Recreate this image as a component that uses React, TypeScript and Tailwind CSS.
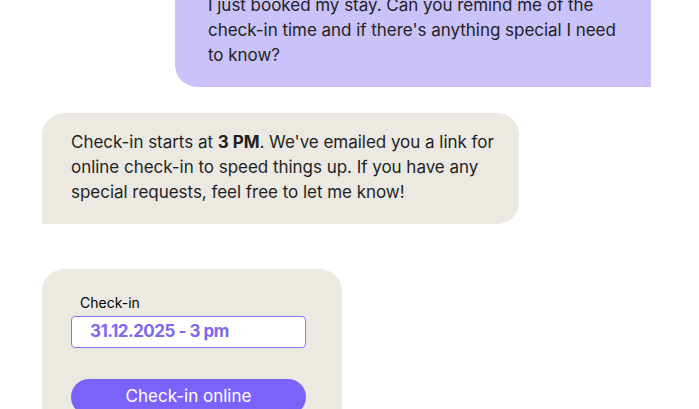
export default function App() {
  return (
    <div
      className="w-[699px] h-[409px] overflow-hidden bg-white text-[#1f1e22]"
      style={{ fontFamily: "Inter, 'Noto Sans', sans-serif" }}
    >
      <div className="flex flex-col mt-[-25px]">
        <div className="flex justify-end pr-[48px]">
          <div className="w-[476px] bg-[#c9c2fb] rounded-[22px] rounded-br-none pl-[33px] pr-[30px] pt-[18px] pb-[19px] text-[17px] leading-[25px] tracking-[-0.03px]">
            I just booked my stay. Can you remind me of the check-in time and if there's anything special I need to know?
          </div>
        </div>
        <div className="flex pl-[42px] mt-[26px]">
          <div className="w-[477px] bg-[#ece9e2] rounded-[22px] rounded-bl-none pl-[29px] pr-[22px] pt-[17px] pb-[19px] text-[17px] leading-[25px] tracking-[-0.03px]">
            Check-in starts at <span className="font-bold">3 PM</span>. We've emailed you a link for online check-in to speed things up. If you have any special requests, feel free to let me know!
          </div>
        </div>
        <div className="flex pl-[42px] mt-[45px]">
          <div className="w-[300px] h-[200px] bg-[#ece9e2] rounded-t-[22px] pl-[29px] pr-[36px] pt-[24px] flex flex-col">
            <div className="pl-[9px] text-[14px] leading-[20px] text-black">Check-in</div>
            <div className="mt-[3px] h-[32px] border border-[#8a76f3] rounded-[4px] bg-white flex items-center pl-[18px] text-[17px] font-bold text-[#7c66f2] tracking-[-0.5px]">
              31.12.2025 - 3 pm
            </div>
            <div className="mt-[31px] h-[36px] rounded-full bg-[#7b62fb] flex items-center justify-center text-white text-[17px]">
              Check-in online
            </div>
          </div>
        </div>
      </div>
    </div>
  );
}
